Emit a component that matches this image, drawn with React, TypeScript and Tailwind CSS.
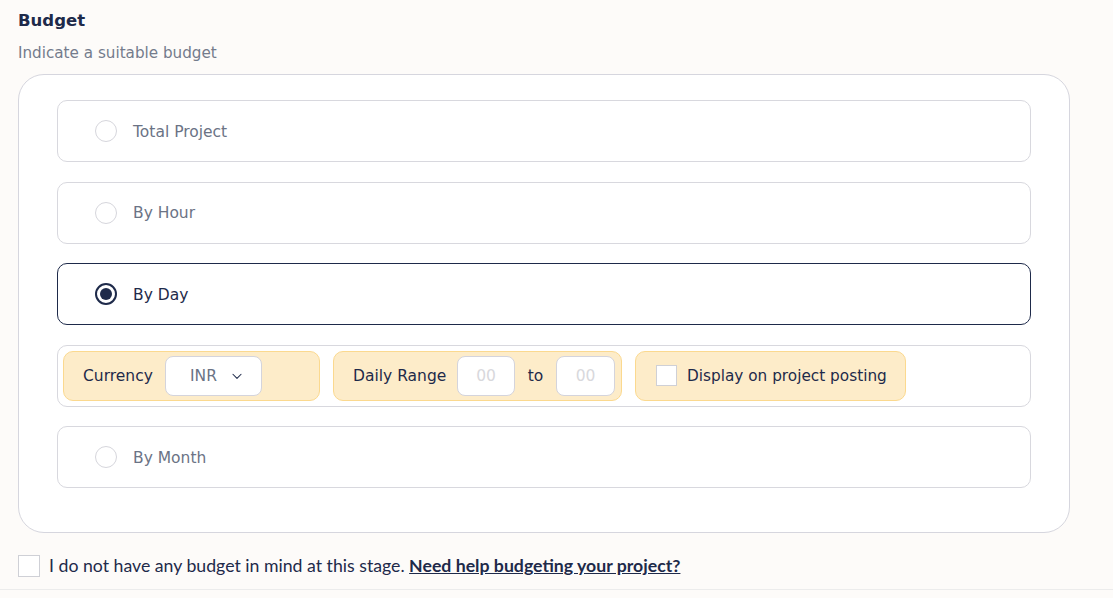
import React, { useState } from 'react';

const options = ['Total Project', 'By Hour', 'By Day', 'By Month'];

function Radio({ checked }: { checked: boolean }) {
  return (
    <span
      className={
        checked
          ? 'flex h-[22px] w-[22px] items-center justify-center rounded-full border-2 border-[#1e2a4a] bg-white'
          : 'flex h-[22px] w-[22px] items-center justify-center rounded-full border border-[#d6d6dc] bg-white'
      }
    >
      {checked && <span className="h-[12px] w-[12px] rounded-full bg-[#1e2a4a]" />}
    </span>
  );
}

function OptionRow({ label, checked, onClick }: { label: string; checked: boolean; onClick: () => void }) {
  return (
    <div
      onClick={onClick}
      className={
        checked
          ? 'flex h-[62px] cursor-pointer items-center gap-[16px] rounded-[10px] border border-[#1e2a4a] bg-white pl-[37px]'
          : 'flex h-[62px] cursor-pointer items-center gap-[16px] rounded-[10px] border border-[#d8d8de] bg-white pl-[37px]'
      }
    >
      <Radio checked={checked} />
      <span className={checked ? 'pt-[3px] text-[15.5px] text-[#1e2a4a]' : 'pt-[3px] text-[15.5px] text-[#6b7385]'}>{label}</span>
    </div>
  );
}

function DayFields() {
  return (
    <div className="flex h-[62px] items-center gap-[13px] rounded-[10px] border border-[#d8d8de] bg-white px-[5px]">
      <div className="flex h-[50px] w-[257px] items-center rounded-[10px] border border-[#fbd98f] bg-[#fdecc9] pl-[19px]">
        <span className="pt-[2px] text-[15.5px] text-[#1e2a4a]">Currency</span>
        <div className="ml-auto mr-[57px] flex h-[40px] w-[97px] items-center rounded-[8px] border border-[#d4d4dc] bg-white pl-[24px]">
          <span className="pt-[2px] text-[15.5px] text-[#6b7385]">INR</span>
          <svg className="ml-[13px]" width="14" height="14" viewBox="0 0 24 24" fill="none" stroke="#1e2a4a" strokeWidth="1.8" strokeLinecap="round" strokeLinejoin="round">
            <path d="M5 9l7 7 7-7" />
          </svg>
        </div>
      </div>
      <div className="flex h-[50px] w-[289px] items-center rounded-[10px] border border-[#fbd98f] bg-[#fdecc9] pl-[19px] pr-[6px]">
        <span className="pt-[2px] text-[15.5px] text-[#1e2a4a]">Daily Range</span>
        <div className="ml-auto flex h-[40px] w-[58px] items-center justify-center rounded-[8px] border border-[#d4d4dc] bg-white">
          <span className="pt-[2px] text-[15.5px] text-[#d8d8dc]">00</span>
        </div>
        <span className="w-[41px] pt-[2px] text-center text-[15.5px] text-[#1e2a4a]">to</span>
        <div className="flex h-[40px] w-[59px] items-center justify-center rounded-[8px] border border-[#d4d4dc] bg-white">
          <span className="pt-[2px] text-[15.5px] text-[#d8d8dc]">00</span>
        </div>
      </div>
      <div className="flex h-[50px] w-[271px] items-center rounded-[10px] border border-[#fbd98f] bg-[#fdecc9] pl-[20px]">
        <span className="h-[21px] w-[21px] border border-[#cfd0d6] bg-white" />
        <span className="ml-[10px] pt-[2px] text-[15.3px] text-[#1e2a4a]">Display on project posting</span>
      </div>
    </div>
  );
}

export default function App() {
  const [selected, setSelected] = useState('By Day');

  return (
    <div className="h-[598px] w-full bg-[#fdfbf9] font-['DejaVu_Sans',sans-serif]">
      <div className="pl-[18px] pt-[10px]">
        <h2 className="text-[16.5px] font-bold leading-[22px] text-[#1e2a4a]">Budget</h2>
        <p className="mt-[11px] text-[15.2px] leading-[20px] text-[#747b8c]">Indicate a suitable budget</p>
      </div>
      <div className="ml-[18px] mt-[11px] w-[1052px] rounded-[26px] border border-[#d6d6de] bg-white px-[38px] pb-[44px] pt-[25px]">
        <div className="flex flex-col gap-[19.5px]">
          {options.map((o) => (
            <React.Fragment key={o}>
              <OptionRow label={o} checked={selected === o} onClick={() => setSelected(o)} />
              {o === 'By Day' && selected === 'By Day' && <DayFields />}
            </React.Fragment>
          ))}
        </div>
      </div>
      <div className="mt-[22px] flex items-center border-b border-[#ececec] pb-[12px] pl-[18px] font-['Lato',sans-serif]">
        <span className="h-[22px] w-[22px] border border-[#cfd0d6] bg-white" />
        <span className="ml-[9px] text-[17.7px] leading-[22px] text-[#1e2a4a]">
          I do not have any budget in mind at this stage.{' '}
          <a href="#" className="font-bold underline">Need help budgeting your project?</a>
        </span>
      </div>
    </div>
  );
}
